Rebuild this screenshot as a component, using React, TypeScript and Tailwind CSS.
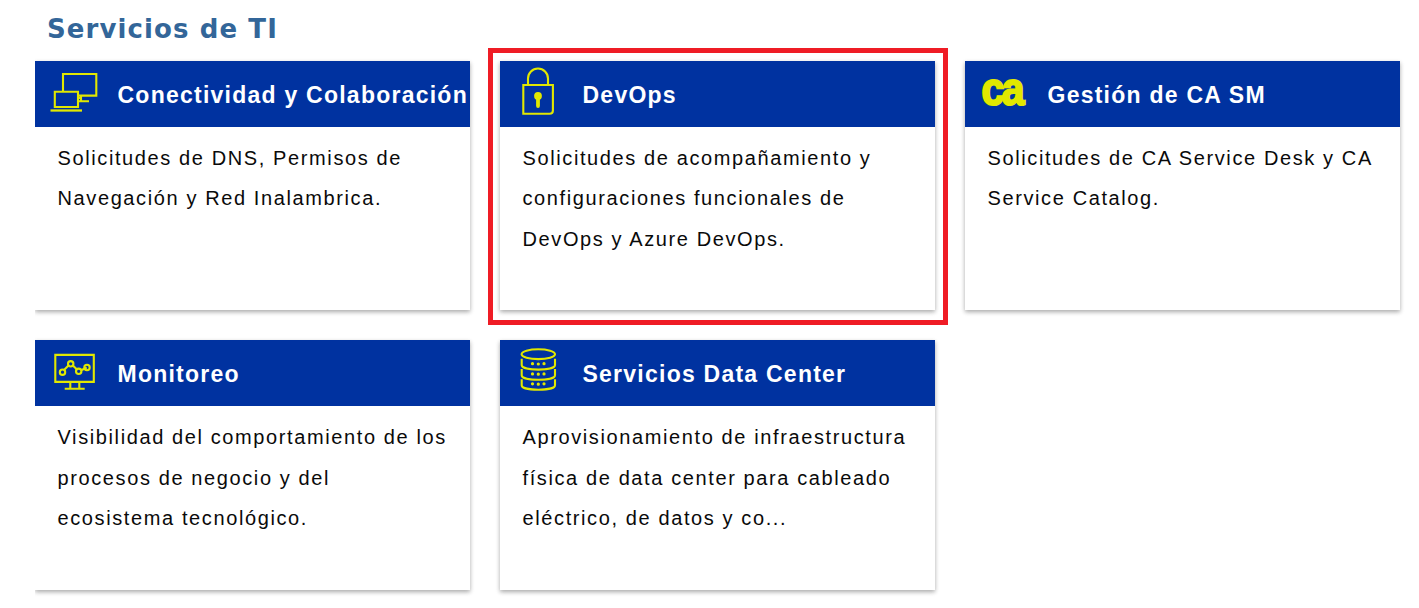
import type { ReactNode } from "react";

const stroke = { fill: "none", stroke: "#e1e800", strokeWidth: 2.1 };

const Devices = () => (
  <svg className="size-[66px] shrink-0" viewBox="0 0 66 66" {...stroke}>
    <path d="M28 31V13h33.300v21.600H43" />
    <path d="M19.800 30.800h23.200v15.200H19.800z" />
    <path d="M46 35v5M43.500 40.300H54M46 35.500v5M43.500 37h3" />
    <path d="M15.500 49.500h31.500" strokeWidth="2.300" />
  </svg>
);

const Lock = () => (
  <svg className="size-[66px] shrink-0" viewBox="0 0 66 66" {...stroke}>
    <path d="M28 24V17.500a10 10 0 0 1 20 0V24" />
    <path d="M23.300 24h29.600v25.500q0 3.300-3.300 3.300H23.300z" />
    <circle cx="38" cy="35" r="3.900" fill="#e1e800" stroke="none" />
    <path d="M38 36v9" strokeWidth="3.800" strokeLinecap="round" />
  </svg>
);

const CaLogo = () => (
  <svg className="size-[66px] shrink-0" viewBox="0 0 66 66">
    <g transform="translate(16.600 43.700) scale(0.870 1)">
      <text className="font-['Liberation_Sans',Arial,sans-serif] text-[47px] font-bold tracking-[-3px]" fill="#e1e800" stroke="#e1e800" strokeWidth="2.200">
        ca
      </text>
    </g>
  </svg>
);

const Monitor = () => (
  <svg className="size-[66px] shrink-0" viewBox="0 0 66 66" {...stroke}>
    <path d="M20.300 14.900h38.500v27H20.300zM35.300 42v6M44.300 42v6M29.700 48.700h20" />
    <path d="m29 30 5-5M37.800 25.500l4.500 4.200M46.700 30l5-2.500" />
    <circle cx="27.500" cy="32.200" r="2.700" />
    <circle cx="35.700" cy="23.800" r="2.700" />
    <circle cx="43.700" cy="31.300" r="2.700" />
    <circle cx="52" cy="27.500" r="2.700" />
  </svg>
);

const Database = () => (
  <svg className="size-[66px] shrink-0" viewBox="0 0 66 66" {...stroke}>
    <ellipse cx="38.300" cy="14.200" rx="16.700" ry="4.900" />
    <path d="M21.700 18.800v6.300c0 6 33.300 6 33.300 0v-6.300M21.700 29v6.300c0 6 33.300 6 33.300 0V29M21.700 39.200v6c0 6 33.300 6 33.300 0v-6" />
    <path d="M32.500 23.700h.01M38.300 24h.01M44 23.700h.01M32.500 33.900h.01M38.300 34.200h.01M44 33.900h.01M32.500 43.800h.01M38.300 44.200h.01M44 43.800h.01" strokeWidth="3.200" strokeLinecap="round" />
  </svg>
);

type Service = { title: string; lines: string[]; icon: ReactNode; marked?: boolean };

const services: Service[] = [
  { title: "Conectividad y Colaboración", lines: ["Solicitudes de DNS, Permisos de", "Navegación y Red Inalambrica."], icon: <Devices /> },
  { title: "DevOps", lines: ["Solicitudes de acompañamiento y", "configuraciones funcionales de", "DevOps y Azure DevOps."], icon: <Lock />, marked: true },
  { title: "Gestión de CA SM", lines: ["Solicitudes de CA Service Desk y CA", "Service Catalog."], icon: <CaLogo /> },
  { title: "Monitoreo", lines: ["Visibilidad del comportamiento de los", "procesos de negocio y del", "ecosistema tecnológico."], icon: <Monitor /> },
  { title: "Servicios Data Center", lines: ["Aprovisionamiento de infraestructura", "física de data center para cableado", "eléctrico, de datos y co..."], icon: <Database /> },
];

function ServiceCard({ title, lines, icon, marked }: Service) {
  return (
    <article className="relative bg-white shadow-[0_2px_5px_rgba(0,0,0,0.16),0_2px_4px_rgba(0,0,0,0.2)]">
      <header className="flex h-[66px] items-center overflow-hidden bg-[#0032a0] whitespace-nowrap text-white">
        {icon}
        <h2 className="ml-[16.500px] pt-[2px] text-[23px] leading-[30px] font-bold tracking-[1.240px]">{title}</h2>
      </header>
      <div className="pt-[11px] pl-[22.500px] text-[20px] leading-[40.400px] tracking-[1.610px] whitespace-nowrap text-[#0a0a0a]">
        {lines.map((line) => (
          <p key={line}>{line}</p>
        ))}
      </div>
      {marked && <div className="pointer-events-none absolute -top-[13px] -left-[12px] h-[277px] w-[460px] border-[5px] border-[#ef1c25]" />}
    </article>
  );
}

export default function App() {
  return (
    <main className="h-[608px] w-[1419px] overflow-hidden bg-white pl-[35px] font-['Liberation_Sans',Arial,sans-serif]">
      <h1 className="h-[41px] pt-[11px] pl-[12px] font-['DejaVu_Sans',Verdana,sans-serif] text-[26px] leading-[36px] font-bold tracking-[1.100px] text-[#336699]">
        Servicios de TI
      </h1>
      <div className="h-[567px] overflow-hidden pt-5">
        <div className="grid grid-cols-[435px_435px_435px] grid-rows-[249.200px_250px] gap-[30px]">
          {services.map((service) => (
            <ServiceCard key={service.title} {...service} />
          ))}
        </div>
      </div>
    </main>
  );
}
